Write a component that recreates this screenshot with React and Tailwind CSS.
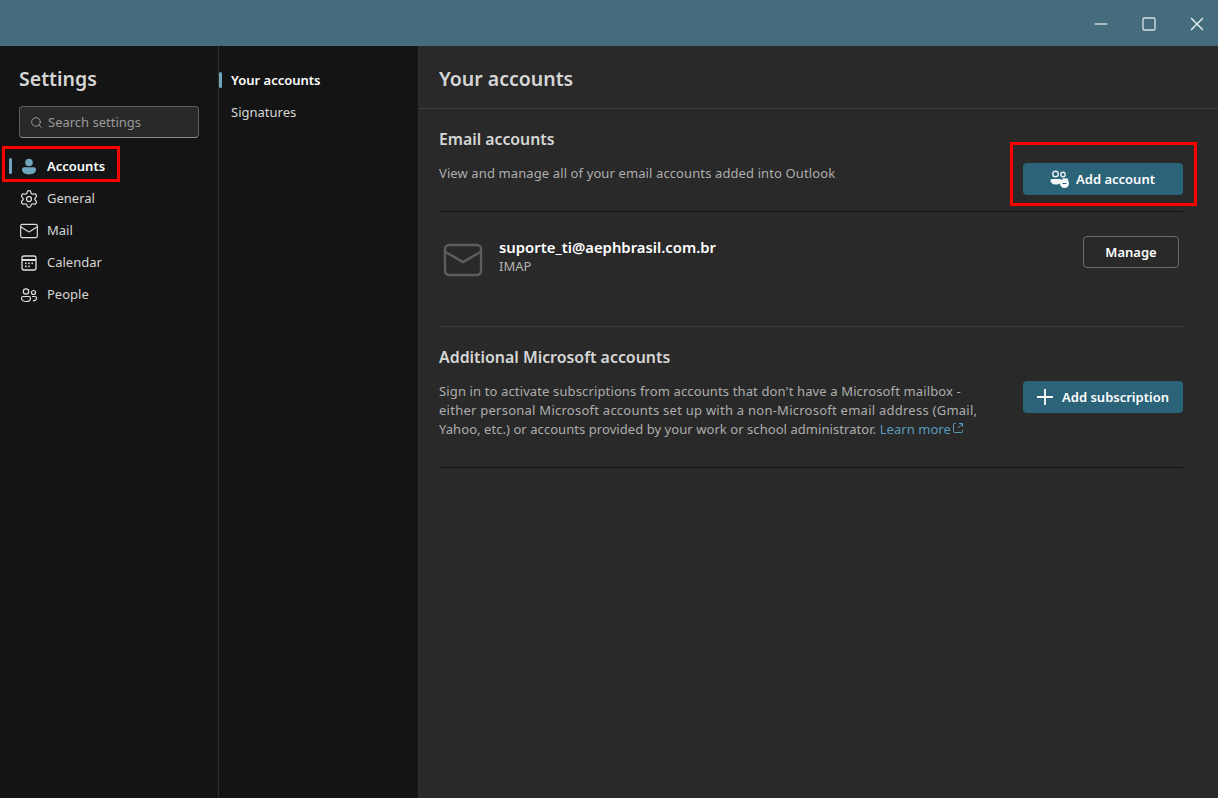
import { Search, Settings, Mail, X, Minus, Square } from "lucide-react";

const font = { fontFamily: '"Noto Sans", "Open Sans", sans-serif' };

function CalendarIcon() {
  return (
    <svg width="20" height="20" viewBox="0 0 20 20" fill="none" stroke="currentColor" strokeWidth="1.3">
      <rect x="3" y="3" width="14" height="14" rx="2" />
      <path d="M3 7h14" strokeWidth="2" />
      <g fill="currentColor" stroke="none">
        <rect x="6" y="9.5" width="1.6" height="1.6" />
        <rect x="9.2" y="9.5" width="1.6" height="1.6" />
        <rect x="12.4" y="9.5" width="1.6" height="1.6" />
        <rect x="6" y="12.6" width="1.6" height="1.6" />
        <rect x="9.2" y="12.6" width="1.6" height="1.6" />
      </g>
    </svg>
  );
}

function PeopleIcon() {
  return (
    <svg width="20" height="20" viewBox="0 0 20 20" fill="none" stroke="currentColor" strokeWidth="1.2">
      <circle cx="7" cy="6.500" r="2.700" />
      <circle cx="14.500" cy="7.500" r="2" />
      <path d="M2.500 13.200c0-1 .8-1.700 1.700-1.700h5.600c1 0 1.700.8 1.700 1.700 0 2-1.900 3.300-4.500 3.300s-4.500-1.300-4.500-3.300z" />
      <path d="M13 11.500h2.800c.9 0 1.700.7 1.700 1.600 0 1.700-1.500 2.800-3.600 2.800" />
    </svg>
  );
}

function PersonFilled() {
  return (
    <svg width="20" height="20" viewBox="0 0 20 20" fill="#6fa5bd">
      <circle cx="10" cy="5.500" r="3.800" />
      <path d="M3 12.300c0-1.200 1-2 2-2h10c1 0 2 .8 2 2 0 3.400-3.200 5.200-7 5.200s-7-1.800-7-5.200z" />
    </svg>
  );
}

function AddAccountIcon() {
  return (
    <svg width="20" height="20" viewBox="0 0 20 20" fill="none">
      <circle cx="5.500" cy="5" r="2.800" stroke="#e6eef2" strokeWidth="1.400" />
      <circle cx="13" cy="5.500" r="2.200" stroke="#e6eef2" strokeWidth="1.400" />
      <path d="M.5 11.500c0-.9.7-1.500 1.500-1.500h8c.9 0 1.500.6 1.500 1.500 0 2.500-2.500 4-5.500 4s-5.500-1.500-5.500-4z" fill="#f2f6f8" />
      <path d="M12.500 10h4c.8 0 1.300.5 1.300 1.300" stroke="#e6eef2" strokeWidth="1.300" />
      <circle cx="14.500" cy="14.500" r="4.500" fill="#f7f9fa" />
      <path d="M12.500 14.500h4" stroke="#2b6379" strokeWidth="1" />
    </svg>
  );
}

function NavItem({ icon, label, active }) {
  return (
    <div className="relative flex h-8 items-center gap-[8px] pl-[19px]">
      {active && <span className="absolute left-[9px] top-[7px] h-4 w-[3px] rounded-full bg-[#6fa5bd]" />}
      <span className={active ? "flex w-5 justify-center" : "flex w-5 justify-center text-[#dedede]"}>{icon}</span>
      <span className={active ? "text-[13px] font-semibold text-white" : "text-[13px] text-[#d6d6d6]"}>{label}</span>
    </div>
  );
}

export default function App() {
  return (
    <div style={font} className="relative flex h-[798px] w-[1218px] flex-col overflow-hidden bg-[#292929]">
      {/* Title bar */}
      <div className="flex h-[46px] shrink-0 items-center justify-end bg-[#446c7c] pt-[2px] text-[#e4ebee]">
        <div className="flex w-12 justify-center"><Minus size={20} strokeWidth={1.8} className="text-[#c9d6db]" /></div>
        <div className="flex w-12 justify-center"><Square size={16} strokeWidth={2} className="text-[#d5e0e4]" /></div>
        <div className="-mr-[3px] flex w-12 justify-center"><X size={22} strokeWidth={1.6} /></div>
      </div>

      <div className="flex min-h-0 flex-1">
        {/* Settings nav */}
        <aside className="w-[219px] shrink-0 border-r border-[#2e2e2e] bg-[#141414]">
          <h1 className="pl-[19px] pt-[17px] text-[19.5px] font-semibold leading-[32px] text-[#d6d6d6]">Settings</h1>
          <div className="mx-[19px] mt-[11px] flex h-8 w-[180px] items-center gap-[5px] rounded-[4px] border border-[#5e5e5e] border-b-[#8a8a8a] bg-[#292929] pl-[10px]">
            <Search size={13} strokeWidth={1.5} className="text-[#adadad]" />
            <span className="pt-px text-[13px] text-[#9a9a9a]">Search settings</span>
          </div>
          <nav className="mt-[13px]">
            <NavItem active icon={<PersonFilled />} label="Accounts" />
            <NavItem icon={<Settings size={20} strokeWidth={1.5} />} label="General" />
            <NavItem icon={<Mail size={20} strokeWidth={1.4} />} label="Mail" />
            <NavItem icon={<CalendarIcon />} label="Calendar" />
            <NavItem icon={<PeopleIcon />} label="People" />
          </nav>
        </aside>

        {/* Sub nav */}
        <div className="w-[200px] shrink-0 border-r border-[#2e2e2e] bg-[#141414] pt-[19px]">
          <div className="relative flex h-8 items-center pl-3">
            <span className="absolute left-0 top-[7px] h-4 w-[3px] rounded-full bg-[#6fa5bd]" />
            <span className="text-[13px] font-semibold text-white">Your accounts</span>
          </div>
          <div className="flex h-8 items-center pl-3 text-[13px] text-[#d6d6d6]">Signatures</div>
        </div>

        {/* Content */}
        <main className="min-w-0 flex-1">
          <div className="flex h-[63px] items-center border-b border-[#3d3d3d] pl-5 pt-[3px]">
            <h2 className="text-[19.5px] font-semibold text-[#d6d6d6]">Your accounts</h2>
          </div>

          <div className="ml-5 w-[744px]">
            <div className="flex items-start justify-between border-b border-[#0f0f0f] pb-[16px] pt-[18px]">
              <div>
                <h3 className="text-[15.8px] font-semibold leading-[24px] text-[#d6d6d6]">Email accounts</h3>
                <p className="mt-[12px] text-[13px] leading-[20px] tracking-[0.11px] text-[#adadad]">View and manage all of your email accounts added into Outlook</p>
              </div>
              <button className="mt-[36px] flex h-8 w-40 items-center justify-center gap-[6px] rounded-[4px] bg-[#2b6379] pr-[1px] text-[13px] font-semibold text-white">
                <AddAccountIcon />
                <span className="pt-px">Add account</span>
              </button>
            </div>

            <div className="flex h-[115px] items-start justify-between border-b border-[#3d3d3d] pr-1 pt-6">
              <div className="flex items-start gap-4 pl-1">
                <svg width="40" height="40" viewBox="0 0 40 40" fill="none" stroke="#5e5e5e" strokeWidth="2.400" className="mt-1">
                  <rect x="2" y="5" width="36" height="30" rx="4" />
                  <path d="M2.500 12 20 22l17.500-10" />
                </svg>
                <div>
                  <div className="text-[14.850px] font-semibold leading-[22px] text-white">suporte_ti@aephbrasil.com.br</div>
                  <div className="text-[13px] leading-[17px] text-[#b4b4b4]">IMAP</div>
                </div>
              </div>
              <button className="h-8 w-24 rounded-[4px] border border-[#6b6b6b] pt-px text-[13px] font-semibold text-white">Manage</button>
            </div>

            <div className="flex items-start justify-between border-b border-[#0f0f0f] pb-[28px] pt-[18px]">
              <div className="w-[545px]">
                <h3 className="text-[15.900px] font-semibold leading-[24px] text-[#d6d6d6]">Additional Microsoft accounts</h3>
                <p className="mt-[13px] text-[13px] leading-[19px] tracking-[0.13px] text-[#adadad]">
                  Sign in to activate subscriptions from accounts that don't have a Microsoft mailbox -{" "}
                  <span className="tracking-[0.25px]">either personal Microsoft accounts set up with a non-Microsoft email address (Gmail,</span>{" "}
                  <span className="tracking-[0.06px]">Yahoo, etc.) or accounts provided by your work or school administrator.</span>{" "}
                  <a className="tracking-[0.06px] text-[#5a9bbb]">Learn more</a>
                  <svg width="12" height="12" viewBox="0 0 12 12" fill="none" stroke="#5a9bbb" className="ml-[1px] mt-[-6px] inline align-middle">
                    <path d="M4 1.500H2.500a1 1 0 0 0-1 1v7a1 1 0 0 0 1 1h7a1 1 0 0 0 1-1V8M7 1.500h3.500V5M10.500 1.500 6 6" />
                  </svg>
                </p>
              </div>
              <button className="mt-[36px] flex h-8 w-40 items-center justify-center gap-[9px] rounded-[4px] bg-[#2b6379] text-[13px] font-semibold text-white">
                <svg width="16" height="16" viewBox="0 0 16 16" fill="none" stroke="#ffffff" strokeWidth="1.800">
                  <path d="M8 0v16M0 8h16" />
                </svg>
                <span className="pt-px">Add subscription</span>
              </button>
            </div>
          </div>
        </main>
      </div>

      {/* Red annotation boxes */}
      <div className="absolute left-[2px] top-[146px] h-9 w-[118px] border-[3px] border-[#ff0000]" />
      <div className="absolute left-[1010px] top-[142px] h-[64px] w-[187px] border-[3px] border-[#ff0000]" />
    </div>
  );
}
